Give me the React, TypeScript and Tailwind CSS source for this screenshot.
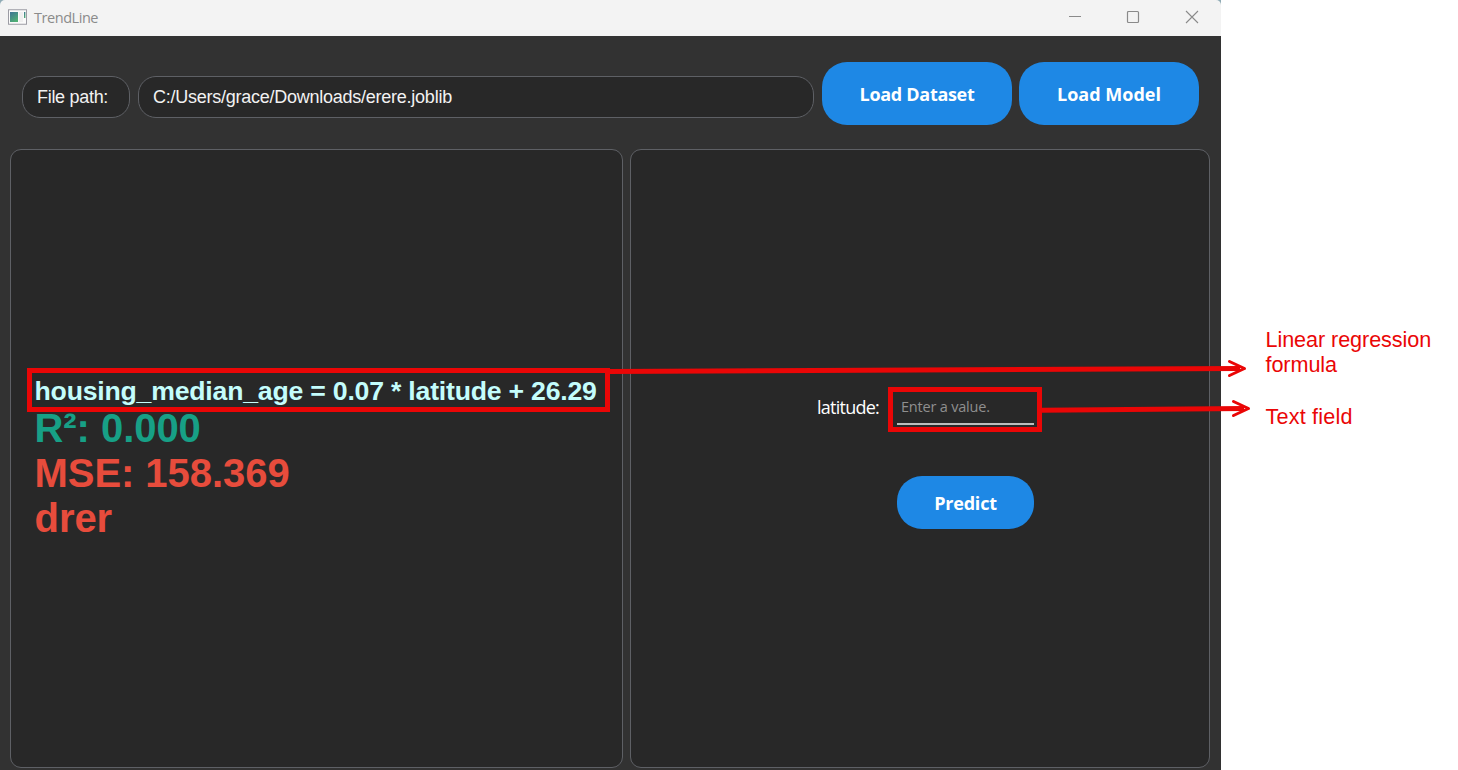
import React from "react";

const ARIAL = "font-['Liberation_Sans',Arial,sans-serif]";
const SEGOE = "font-['Open_Sans','Segoe_UI',sans-serif]";

function AppIcon() {
  return (
    <svg width="19" height="16" viewBox="0 0 19 16" className="relative -top-px shrink-0">
      <defs>
        <linearGradient id="pane" x1="0" y1="0" x2="0.6" y2="1">
          <stop offset="0" stopColor="#3d7396" />
          <stop offset="1" stopColor="#4fae74" />
        </linearGradient>
      </defs>
      <rect x="0.5" y="0.75" width="18" height="14.5" fill="#fafafa" stroke="#9c9ca4" />
      <rect x="2" y="3" width="8" height="10" fill="url(#pane)" />
      <rect x="11" y="3" width="4" height="10" fill="#efefef" />
      <rect x="16" y="3" width="1.4" height="6" fill="url(#pane)" />
    </svg>
  );
}

function TitleBar() {
  return (
    <header className="flex h-9 items-center rounded-t-[5px] bg-[#f3f3f3] pl-2 pr-[22px]">
      <AppIcon />
      <span className={`${SEGOE} -mt-px ml-[7px] text-[14.5px] tracking-[-0.45px] text-[#8b8b8b]`}>TrendLine</span>
      <div className="-mt-[2px] ml-auto flex gap-[45px] text-[#8a8a8a]">
        <svg width="14" height="14" viewBox="0 0 14 14" fill="none" stroke="currentColor">
          <path d="M2 6.5H14" />
        </svg>
        <svg width="14" height="14" viewBox="0 0 14 14" fill="none" stroke="currentColor" strokeWidth="1.2">
          <rect x="1.5" y="1.5" width="11" height="11" rx="1" />
        </svg>
        <svg width="14" height="14" viewBox="0 0 14 14" fill="none" stroke="currentColor" strokeWidth="1.1">
          <path d="M1 1L13 13M13 1L1 13" />
        </svg>
      </div>
    </header>
  );
}

function Toolbar() {
  const field = `${ARIAL} flex h-[42px] items-center rounded-[18px] border border-[#5e6065] bg-[#282828] pl-[14px] text-[18px] text-[#f2f2f2]`;
  const button = `${SEGOE} flex h-[62.5px] items-center justify-center rounded-[25px] bg-[#1e88e5] pt-[2px] text-[18px] font-bold text-white`;
  return (
    <div className="flex h-[113px] items-start pl-[22px] pt-[26px]">
      <div className={`${field} mt-[14px] w-[108px]`}>
        <span className="tracking-[-0.3px]">File path:</span>
      </div>
      <div className={`${field} ml-2 mt-[14px] w-[676px]`}>
        <span className="tracking-[-0.25px]">C:/Users/grace/Downloads/erere.joblib</span>
      </div>
      <button className={`${button} ml-2 w-[190px]`}>
        <span className="tracking-[-0.3px]">Load Dataset</span>
      </button>
      <button className={`${button} ml-[7px] w-[180px]`}>
        <span className="tracking-[0px]">Load Model</span>
      </button>
    </div>
  );
}

function ResultsPanel() {
  return (
    <section
      className={`${ARIAL} flex w-[613px] flex-col whitespace-nowrap rounded-[11px] border border-[#5e6065] bg-[#282828] pl-[16px] pt-[218px] font-bold`}
    >
      <div className="flex h-[44px] w-[583px] items-center border-[5px] border-[#ea0606] pl-[2.5px] pt-[2px] text-[26.67px] text-[#c4fdfc]">
        <span className="tracking-[-0.22px]">housing_median_age = 0.07 * latitude + 26.29</span>
      </div>
      <div className="-mt-[6px] pl-[7.5px] text-[40px] leading-[45px] tracking-[-0.05px]">
        <p className="text-[#17a086]">R²: 0.000</p>
        <p className="text-[#e74c3c]">MSE: 158.369</p>
        <p className="text-[#e74c3c]">drer</p>
      </div>
    </section>
  );
}

function PredictPanel() {
  return (
    <section
      className={`${SEGOE} ml-[7px] flex w-[580px] flex-col rounded-[11px] border border-[#5e6065] bg-[#282828] pt-[237px]`}
    >
      <div className="flex h-[45px] items-start">
        <span className="ml-[186px] mt-[7px] w-[71px] whitespace-nowrap text-[18px] leading-[26px] tracking-[-0.75px] text-white">
          latitude:
        </span>
        <div className="h-[45px] w-[154px] border-[5px] border-[#ea0606] pl-[4px] pr-[3px]">
          <div className="h-[33px] border-b-2 border-[#bdbdbd] pl-[4px] pt-[3px] text-[14.5px] leading-[24px] text-[#8f8f8f]">
            <span className="tracking-[-0.2px]">Enter a value.</span>
          </div>
        </div>
      </div>
      <button className="ml-[266px] mt-[44px] flex h-[52.5px] w-[137px] items-center justify-center rounded-[25px] bg-[#1e88e5] pt-[2px] text-[18px] font-bold text-white">
        <span className="tracking-[-0.2px]">Predict</span>
      </button>
    </section>
  );
}

function Notes() {
  return (
    <aside className={`${ARIAL} whitespace-nowrap pl-[44.5px] pt-[327px] text-[21.6px] leading-[25px] text-[#ea0606]`}>
      <p className="tracking-[-0.07px]">
        Linear regression
        <br />
        formula
      </p>
      <p className="mt-[27px] tracking-[0.2px]">Text field</p>
    </aside>
  );
}

function Arrows() {
  return (
    <svg
      className="pointer-events-none absolute left-0 top-0"
      width="1458"
      height="770"
      viewBox="0 0 1458 770"
      fill="none"
      stroke="#ea0606"
      strokeLinejoin="round"
      strokeLinecap="round"
    >
      <path d="M609 371.5L1240 368.5" strokeWidth="5" strokeLinecap="butt" />
      <path d="M1041 410.3L1244 408.5" strokeWidth="5" strokeLinecap="butt" />
      <path d="M1229.5 361.5L1244.5 368.5L1229.5 375.5" strokeWidth="3" />
      <path d="M1233.5 401.5L1248.5 408.5L1233.5 415.5" strokeWidth="3" />
    </svg>
  );
}

export default function App() {
  return (
    <div className="relative flex h-[770px] w-[1458px] overflow-hidden bg-white">
      <div className="flex h-[770px] w-[1221px] shrink-0 flex-col bg-[#8fabb5]">
        <TitleBar />
        <main className="flex flex-1 flex-col bg-[#323232]">
          <Toolbar />
          <div className="flex h-[619px] pl-[10px]">
            <ResultsPanel />
            <PredictPanel />
          </div>
        </main>
      </div>
      <Notes />
      <Arrows />
    </div>
  );
}
